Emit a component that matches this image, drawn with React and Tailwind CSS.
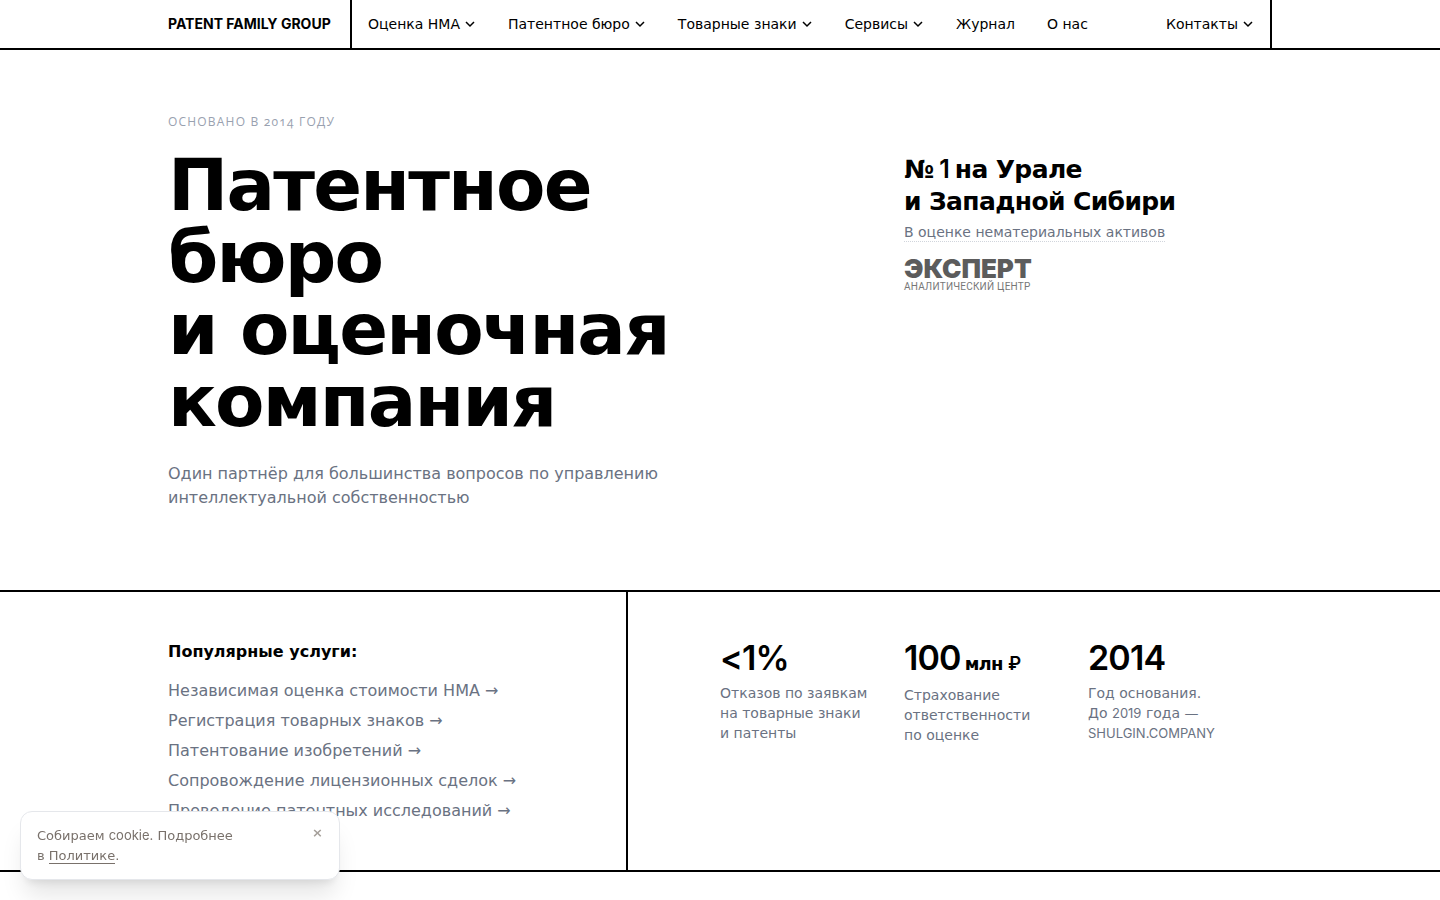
import { useState } from "react"

const navItems = [
  { label: "Оценка НМА", menu: true },
  { label: "Патентное бюро", menu: true },
  { label: "Товарные знаки", menu: true },
  { label: "Сервисы", menu: true },
  { label: "Журнал", menu: false },
  { label: "О нас", menu: false },
]

const services = [
  "Независимая оценка стоимости НМА",
  "Регистрация товарных знаков",
  "Патентование изобретений",
  "Сопровождение лицензионных сделок",
  "Проведение патентных исследований",
]

function NavItem({ label, menu }) {
  if (!menu) {
    return (
      <a href="#" className="px-4">
        {label}
      </a>
    )
  }
  return (
    <button type="button" className="flex items-center gap-1 px-4">
      {label}
      <svg viewBox="0 0 12 12" className="size-3" fill="none" stroke="currentColor" strokeWidth="1.5">
        <path d="M2 4l4 4 4-4" />
      </svg>
    </button>
  )
}

function Header() {
  return (
    <header className="border-b-2 border-black">
      <div className="mx-auto flex h-12 max-w-[1104px] items-stretch border-r-2 border-black text-sm">
        <a
          href="#"
          className="flex w-[184px] shrink-0 items-center border-r-2 border-black font-['Inter',sans-serif] font-bold"
        >
          PATENT FAMILY GROUP
        </a>
        <nav className="flex grow items-center whitespace-nowrap">
          {navItems.map((item) => (
            <NavItem key={item.label} {...item} />
          ))}
          <div className="ml-auto">
            <NavItem label="Контакты" menu />
          </div>
        </nav>
      </div>
    </header>
  )
}

function ExpertLogo() {
  return (
    <div className="mt-[15px] text-[#5c5c5c]">
      <div className="font-['Inter',sans-serif] text-[26px] leading-5 font-black">ЭКСПЕРТ</div>
      <div className="mt-[2px] font-['Roboto',sans-serif] text-[10px] leading-3 tracking-wide text-[#777777]">
        АНАЛИТИЧЕСКИЙ ЦЕНТР
      </div>
    </div>
  )
}

function Stat({ value, unit, children }) {
  return (
    <div>
      <div className="flex items-baseline gap-1 font-['Inter',sans-serif] text-[34px] leading-9 font-semibold tracking-tight">
        {value}
        {unit && (
          <span className="font-['DejaVu_Sans',sans-serif] text-lg leading-7 font-bold">
            {unit} <span className="font-['Inter',sans-serif] font-semibold">₽</span>
          </span>
        )}
      </div>
      <p className="mt-[7px] text-sm leading-5 text-gray-500">{children}</p>
    </div>
  )
}

function CookieNotice() {
  const [open, setOpen] = useState(true)
  if (!open) return null
  return (
    <div className="fixed bottom-5 left-5 flex w-80 items-start justify-between rounded-xl border border-gray-200 bg-white px-4 py-[13px] text-[13px] leading-5 text-stone-500 shadow-xl">
      <p>
        Собираем <span className="font-['Inter',sans-serif]">cookie.</span> Подробнее
        <br />в{" "}
        <a href="#" className="border-b border-stone-500">
          Политике
        </a>
        .
      </p>
      <button
        type="button"
        aria-label="Закрыть"
        className="leading-4 font-bold text-stone-400"
        onClick={() => setOpen(false)}
      >
        ×
      </button>
    </div>
  )
}

export default function App() {
  return (
    <div className="bg-white font-['DejaVu_Sans',sans-serif] text-black">
      <Header />

      <section className="mx-auto grid max-w-[1104px] grid-cols-3 pt-16 pb-20">
        <div className="col-span-2">
          <p className="font-['Open_Sans',sans-serif] text-xs leading-4 tracking-widest text-gray-400 uppercase oldstyle-nums">
            Основано в 2014 году
          </p>
          <h1 className="mt-[19px] text-7xl leading-[72px] font-bold tracking-tight">
            Патентное
            <br />
            бюро
            <br />и оценочная
            <br />
            компания
          </h1>
          <p className="mt-[25px] leading-6 text-gray-500">
            Один партнёр для большинства вопросов по управлению
            <br />
            интеллектуальной собственностью
          </p>
        </div>
        <div className="pt-[39px]">
          <h2 className="text-[25px] leading-8 font-bold tracking-tight">
            №<span className="font-['Inter',sans-serif] font-semibold"> 1 </span>на Урале
            <br />и Западной Сибири
          </h2>
          <a
            href="#"
            className="mt-[5px] inline-block border-b border-dotted border-gray-300 text-sm leading-[18px] text-gray-500"
          >
            В оценке нематериальных активов
          </a>
          <ExpertLogo />
        </div>
      </section>

      <section className="border-y-2 border-black">
        <div className="mx-auto grid max-w-[1104px] grid-cols-12">
          <div className="col-span-5 border-r-2 border-black pt-12 pb-[47px]">
            <h2 className="leading-6 font-bold">Популярные услуги:</h2>
            <ul className="mt-[15px] flex flex-col gap-[6px] leading-6 text-gray-500">
              {services.map((service) => (
                <li key={service}>
                  <a href="#">{service} →</a>
                </li>
              ))}
            </ul>
          </div>
          <div className="col-span-6 col-start-7 grid grid-cols-3 pt-12">
            <Stat value="<1%">
              Отказов по заявкам
              <br />
              на товарные знаки
              <br />и патенты
            </Stat>
            <Stat value="100" unit="млн">
              Страхование
              <br />
              ответственности
              <br />
              по оценке
            </Stat>
            <Stat value="2014">
              Год основания.
              <br />
              До <span className="font-['Inter',sans-serif] text-[13px]">2019</span> года —
              <br />
              <span className="font-['Inter',sans-serif] text-[13px]">SHULGIN.COMPANY</span>
            </Stat>
          </div>
        </div>
      </section>

      <CookieNotice />
    </div>
  )
}
